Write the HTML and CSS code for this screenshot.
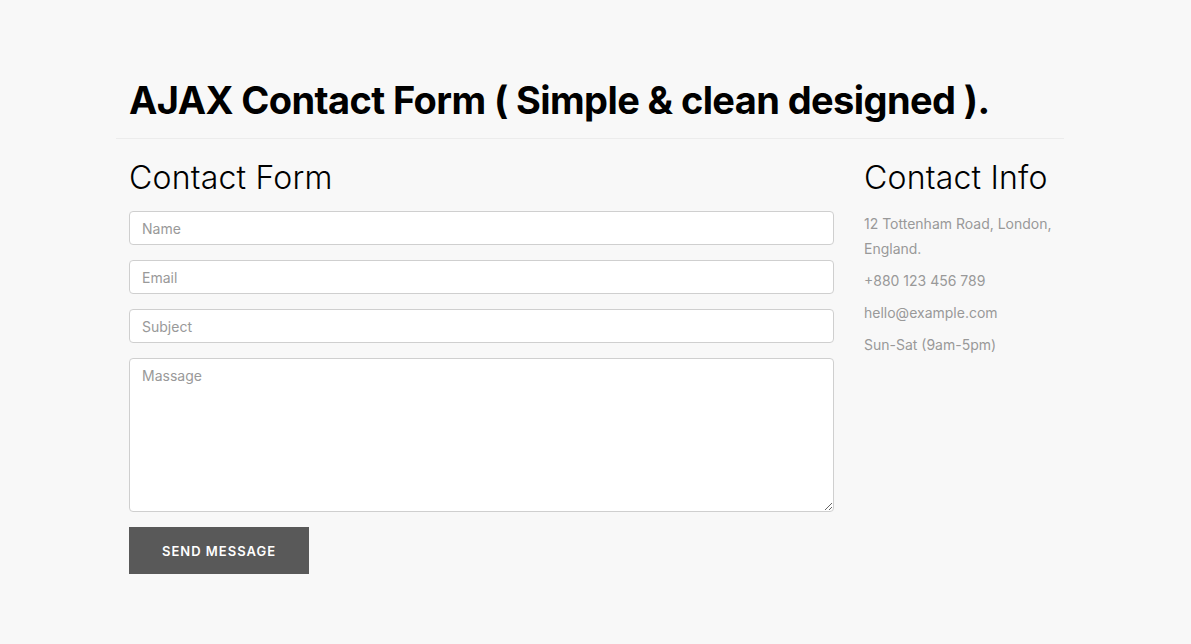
FILE: index.html
```html
<!DOCTYPE html>
<html>
  <head>
    <meta charset="UTF-8" />
    <title>AJAX Contact Form</title>
    <link rel="stylesheet" href="styles.css">
  </head>
  <body>
    <div class="container">
      <h1 class="page-title">AJAX Contact Form ( Simple &amp; clean designed ).</h1>
      <hr class="divider">

      <div class="row">
        <!-- form -->
        <div class="col-form">
          <h2 class="section-title">Contact Form</h2>
          <form id="contact-form" class="contact-form">
            <input type="text" class="field" name="name" placeholder="Name">
            <input type="email" class="field" name="email" placeholder="Email">
            <input type="text" class="field" name="subject" placeholder="Subject">
            <textarea class="field field-message" name="message" placeholder="Massage"></textarea>
            <button type="submit" class="btn-send">Send Message</button>
          </form>
        </div>

        <!-- info -->
        <div class="col-info">
          <h2 class="section-title">Contact Info</h2>
          <p class="info">12 Tottenham Road, London, England.</p>
          <p class="info">+880 123 456 789</p>
          <p class="info">hello@example.com</p>
          <p class="info">Sun-Sat (9am-5pm)</p>
        </div>
      </div>
    </div>
  </body>
</html>
```

FILE: styles.css
```css
body {
  margin: 0;
  padding: 0;
  background: #f8f8f8;
  font-family: "Inter", "Liberation Sans", sans-serif;
  color: #000;
}

.container {
  width: 948px;
  margin-left: 116px;
  padding-top: 74px;
}

.page-title {
  margin: 0;
  padding-left: 13px;
  font-size: 38px;
  font-weight: 700;
  line-height: 52px;
  letter-spacing: -0.6px;
}

.divider {
  margin: 12px 0 0;
  border: none;
  border-top: 1px solid #ececec;
}

.row {
  display: flex;
  gap: 30px;
  padding-left: 13px;
}

.col-form {
  width: 705px;
}

.col-info {
  width: 200px;
}

.section-title {
  margin: 20px 0 14px;
  font-size: 32px;
  font-weight: 300;
  line-height: 38px;
  letter-spacing: 0.2px;
}

.contact-form {
  display: flex;
  flex-direction: column;
  align-items: flex-start;
  gap: 15px;
}

.field {
  box-sizing: border-box;
  width: 705px;
  height: 34px;
  margin: 0;
  padding: 0 12px;
  background: #fff;
  border: 1px solid #cfcfcf;
  border-radius: 4px;
  font-family: inherit;
  font-size: 14px;
  color: #555;
  outline: none;
}

.field::placeholder {
  color: #999;
}

.field-message {
  height: 154px;
  padding: 8px 12px;
  resize: vertical;
}

.btn-send {
  width: 180px;
  height: 47px;
  background: #595959;
  border: none;
  color: #fff;
  font-family: inherit;
  font-size: 13px;
  font-weight: 600;
  letter-spacing: 1px;
  text-transform: uppercase;
  cursor: pointer;
}

.info {
  margin: 0 0 7px;
  font-size: 14px;
  line-height: 25px;
  color: #999;
}
```
